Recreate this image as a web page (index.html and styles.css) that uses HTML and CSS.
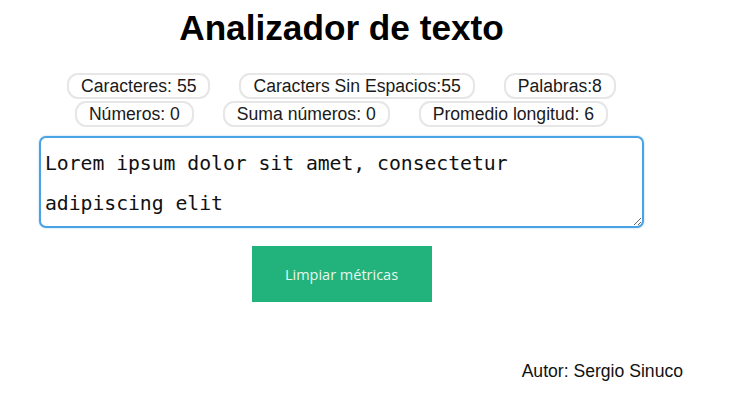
FILE: index.html
```html
<!DOCTYPE html>
<html lang="es">
<head>
<meta charset="utf-8">
<title>Analizador de texto</title>
<link rel="stylesheet" href="styles.css">
</head>
<body>
<main class="page">
  <h1 class="title">Analizador de texto</h1>
  <section class="metrics">
    <div class="metrics-row">
      <span class="chip">Caracteres: 55</span>
      <span class="chip">Caracters Sin Espacios:55</span>
      <span class="chip">Palabras:8</span>
    </div>
    <div class="metrics-row">
      <span class="chip">Números: 0</span>
      <span class="chip">Suma números: 0</span>
      <span class="chip">Promedio longitud: 6</span>
    </div>
  </section>
  <textarea class="input" spellcheck="true">Lorem ipsum dolor sit amet, consectetur adipiscing elit</textarea>
  <div class="actions">
    <button class="btn" type="button">Limpiar métricas</button>
  </div>
  <footer class="author">Autor: Sergio Sinuco</footer>
</main>
</body>
</html>
```
FILE: styles.css
```css
html, body {
  margin: 0;
  padding: 0;
  background: #ffffff;
}

body {
  font-family: "Liberation Sans", Arial, sans-serif;
  color: #111111;
}

.page {
  width: 683px;
  display: flex;
  flex-direction: column;
  align-items: center;
}

.title {
  margin: 8px 0 0;
  font-size: 35.2px;
  line-height: 40px;
  font-weight: bold;
  color: #000000;
}

.metrics {
  margin-top: 25px;
  display: flex;
  flex-direction: column;
  align-items: center;
  row-gap: 2px;
}

.metrics-row {
  display: flex;
  column-gap: 29px;
}

.chip {
  display: block;
  border: 2px solid #e6e6e6;
  border-radius: 11px;
  padding: 1px 12px;
  font-size: 17.6px;
  line-height: 20px;
  color: #1a1a1a;
}

.input {
  box-sizing: border-box;
  margin-top: 9px;
  width: 605px;
  height: 92px;
  padding: 6px 20px 4px 4px;
  border: 2px solid #4aa3e2;
  border-radius: 7px;
  box-shadow: 0 0 2px rgba(74, 163, 226, 0.5);
  font-family: "DejaVu Sans Mono", monospace;
  font-size: 19.8px;
  letter-spacing: -0.05px;
  line-height: 40px;
  color: #111111;
  outline: none;
  resize: both;
  overflow: hidden;
}

.actions {
  margin-top: 18px;
  display: flex;
  justify-content: center;
}

.btn {
  width: 180px;
  height: 56px;
  border: none;
  border-radius: 0;
  background: #21b37b;
  color: #e8f6ef;
  font-family: "Open Sans", sans-serif;
  font-size: 14.5px;
}

.author {
  align-self: flex-end;
  margin-top: 59px;
  font-size: 17.6px;
  line-height: 20px;
  color: #111111;
}
```
